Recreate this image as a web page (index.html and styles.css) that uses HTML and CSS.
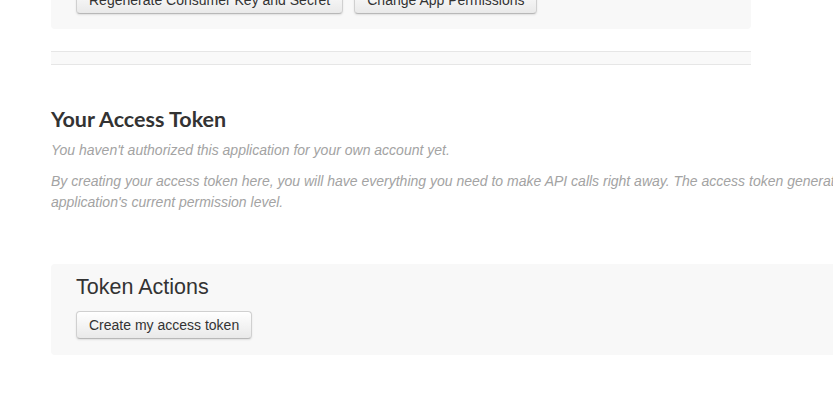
FILE: index.html
```html
<!DOCTYPE html>
<html>
<head>
<meta charset="utf-8">
<link rel="stylesheet" href="styles.css">
</head>
<body>
<div class="page">
  <div class="panel top-panel">
    <div class="btn-row">
      <button class="btn">Regenerate Consumer Key and Secret</button>
      <button class="btn">Change App Permissions</button>
    </div>
  </div>
  <div class="separator"></div>
  <div class="access">
    <h2 class="heading">Your Access Token</h2>
    <p class="note first">You haven't authorized this application for your own account yet.</p>
    <p class="note">By creating your access token here, you will have everything you need to make API calls right away. The access token generated will be assigned your application's current permission level.</p>
  </div>
  <div class="panel token-panel">
    <h3 class="panel-title">Token Actions</h3>
    <button class="btn">Create my access token</button>
  </div>
</div>
</body>
</html>
```

FILE: styles.css
```css
html, body {
  margin: 0;
  padding: 0;
  background: #fff;
  overflow: hidden;
}
body {
  font-family: "Liberation Sans", Arial, sans-serif;
  color: #333;
}
.page {
  padding-left: 51px;
  width: 1040px;
}
.panel {
  background: #f8f8f8;
  border-radius: 4px;
}
.top-panel {
  width: 700px;
  margin-top: -14px;
  padding: 0 25px 15px;
  box-sizing: border-box;
  border-top-left-radius: 0;
  border-top-right-radius: 0;
}
.btn-row {
  display: flex;
  gap: 11px;
}
.btn {
  font-family: "Liberation Sans", Arial, sans-serif;
  font-size: 14px;
  color: #333;
  height: 28px;
  padding: 0 12px;
  background: linear-gradient(#ffffff, #e9e9e9);
  border: 1px solid #d0d0d0;
  border-bottom-color: #b8b8b8;
  border-radius: 4px;
  box-shadow: inset 0 1px 0 rgba(255,255,255,0.6), 0 1px 2px rgba(0,0,0,0.1);
  line-height: 26px;
  box-sizing: border-box;
  cursor: pointer;
}
.separator {
  width: 700px;
  margin-top: 22px;
  height: 14px;
  box-sizing: border-box;
  background: #f9f9f9;
  border-top: 1px solid #e6e6e6;
  border-bottom: 1px solid #e6e6e6;
}
.access {
  padding-top: 39px;
}
.heading {
  margin: 0;
  font-family: Lato, "Open Sans", sans-serif;
  font-weight: 700;
  font-size: 21.5px;
  line-height: 30px;
  color: #333;
}
.note {
  margin: 10px 0 0;
  font-style: italic;
  font-size: 14px;
  line-height: 21px;
  color: #a3a3a3;
  width: 970px;
}
.note.first {
  margin-top: 6px;
}
.token-panel {
  margin-top: 51px;
  padding: 11px 25px 16px;
  width: 940px;
}
.panel-title {
  margin: 0 0 12px;
  font-weight: 400;
  font-size: 21.5px;
  line-height: 24px;
  color: #333;
}
```
